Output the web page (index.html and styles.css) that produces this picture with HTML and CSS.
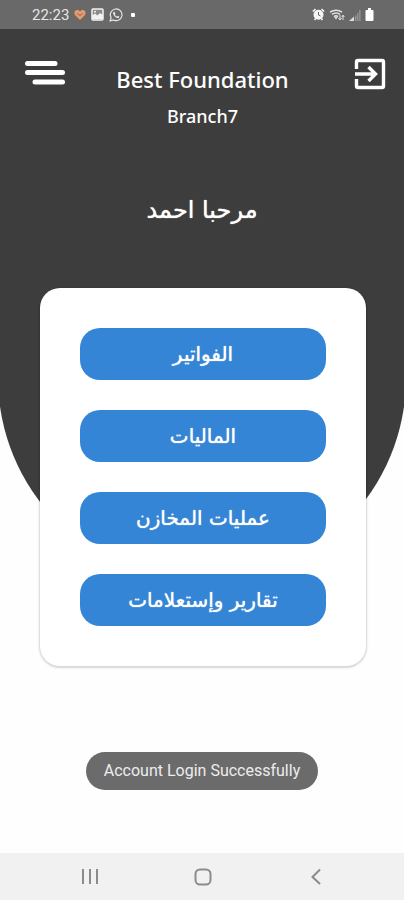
FILE: index.html
```
<!DOCTYPE html>
<html lang="ar">
<head>
<meta charset="utf-8">
<meta name="viewport" content="width=device-width, initial-scale=1">
<title>Best Foundation</title>
<link rel="stylesheet" href="styles.css">
</head>
<body>
<div class="status-bar">
  <div class="status-group">
    <span class="clock">22:23</span>
    <svg width="12" height="12" viewBox="0 0 12 12" aria-hidden="true"><path d="M6 11 1.200 6.200C-.7 3.600 1 1 3.200 1 4.600 1 5.500 1.700 6 2.500 6.500 1.700 7.400 1 8.800 1 11 1 12.700 3.600 10.800 6.200z" fill="#e69a6c"/><path d="m3.500 4.500 2.500 2 2.500-2" fill="none" stroke="#8a6552"/></svg>
    <svg width="13" height="13" viewBox="0 0 13 13" aria-hidden="true"><rect x="1" y="1" width="11" height="11" rx="1" fill="#8a8a8a" stroke="#f2f2f2" stroke-width="1.500"/><path d="M1 11V7.500l3-2 2.500 2L9 5l3 2v4z" fill="#f2f2f2"/><circle cx="4" cy="3.700" r="1" fill="#f2f2f2"/></svg>
    <svg width="14" height="14" viewBox="0 0 24 24" aria-hidden="true"><path d="M2 22l1.600-5.500A10 10 0 1 1 7.500 20.400z" fill="none" stroke="#e8e8e8" stroke-width="2"/><path d="M8.500 6.500c-1.600.8-2 2.800-.8 5 1.600 3 4.300 5.300 7 5.800 1.700.2 3-1 3-2.600L15 13.300l-1.400 1.500c-1.700-.7-3-2-3.800-3.600L11 9.800 9.800 6.700z" fill="#e8e8e8"/></svg>
    <span class="dot"></span>
  </div>
  <div class="status-group status-right">
    <svg width="13" height="13" viewBox="0 0 13 13" aria-hidden="true"><circle cx="6.500" cy="6.800" r="5" fill="#f5f5f5"/><path d="M.8 3.500 3.500 1M12.200 3.500 9.500 1M2.500 12l1.200-1.400M10.500 12 9.300 10.600" stroke="#f5f5f5" stroke-width="1.600"/><path d="M6.500 4v3l2 1" fill="none" stroke="#666"/></svg>
    <svg width="16" height="13" viewBox="0 0 16 13" aria-hidden="true"><path d="M1 4.200Q7 .2 13 4.200M3 6.400q4-2.900 8 0M5 8.600q2-1.700 4 0" fill="none" stroke="#e2e2e2" stroke-width="1.600"/><path d="M7 11.500 5 8.800h4z" fill="#e2e2e2"/><path d="M11 11.500V7M9.500 10l1.500 2 1.500-2M14 12V7.500M12.800 9 14 7.200 15.300 9" fill="none" stroke="#e2e2e2"/></svg>
    <svg width="12" height="12" viewBox="0 0 12 12" aria-hidden="true"><path d="M0 12 5 7.500V12z" fill="#ddd"/><path d="M6 12V6.500h1.500V12zM8.200 12V4h1.300v8zM10.200 12V1h1.300v11z" fill="#979797"/></svg>
    <svg width="9" height="13" viewBox="0 0 9 13" aria-hidden="true"><path d="M3 0h3v2h1.500q1 0 1 1v9q0 1-1 1h-6q-1 0-1-1V3q0-1 1-1H3z" fill="#fff"/></svg>
  </div>
</div>

<main class="screen">
  <header class="header">
    <button class="icon-button" type="button" aria-label="القائمة">
      <svg width="40" height="26" viewBox="0 0 40 26"><path d="M2.500 2.500H30M2.500 11.500h35M10 21h27.500" stroke="#fff" stroke-width="5" stroke-linecap="round"/></svg>
    </button>
    <div class="heading">
      <h1 class="title">Best Foundation</h1>
      <p class="branch">Branch7</p>
    </div>
    <button class="icon-button exit" type="button" aria-label="خروج">
      <svg width="32" height="32" viewBox="0 0 32 32" fill="none" stroke="#fff" stroke-width="3.400"><path d="M2.500 11V4q0-1.500 1.500-1.500h24q1.500 0 1.500 1.500v24q0 1.500-1.500 1.500H4Q2.500 29.500 2.500 28v-7M1 16h20M14.500 9l7 7-7 7"/></svg>
    </button>
  </header>

  <p class="greeting" dir="rtl">مرحبا احمد</p>

  <nav class="card" dir="rtl">
    <button class="action" type="button">الفواتير</button>
    <button class="action" type="button">الماليات</button>
    <button class="action" type="button">عمليات المخازن</button>
    <button class="action" type="button">تقارير وإستعلامات</button>
  </nav>

  <div class="toast" role="status">Account Login Successfully</div>
</main>

<div class="nav-bar">
  <button class="nav-button" type="button" aria-label="Recents"><svg width="18" height="18" viewBox="0 0 18 18"><path d="M2 1v15M9 1v15M16 1v15" stroke="#8b8b8b" stroke-width="2"/></svg></button>
  <button class="nav-button" type="button" aria-label="Home"><svg width="18" height="18" viewBox="0 0 18 18"><rect x="1.500" y="1.500" width="15" height="15" rx="4.500" fill="none" stroke="#8b8b8b" stroke-width="2"/></svg></button>
  <button class="nav-button" type="button" aria-label="Back"><svg width="18" height="18" viewBox="0 0 18 18"><path d="M13 1.500 5.500 9l7.500 7" fill="none" stroke="#8b8b8b" stroke-width="2"/></svg></button>
</div>
</body>
</html>
```

FILE: styles.css
```
* {
  box-sizing: border-box;
}

body {
  margin: 0;
  min-height: 100vh;
  display: flex;
  flex-direction: column;
  background: #fefefe;
  font-family: Roboto, "DejaVu Sans", sans-serif;
  color: #fff;
}

button {
  border: 0;
  padding: 0;
  background: none;
  color: inherit;
  font: inherit;
}

svg {
  display: block;
}

h1,
p {
  margin: 0;
}

.status-bar {
  display: flex;
  justify-content: space-between;
  align-items: center;
  height: 29px;
  padding: 0 30px 0 32px;
  background: #696969;
}

.status-group {
  display: flex;
  align-items: center;
  gap: 5px;
}

.status-right {
  gap: 4px;
}

.clock {
  font-size: 15px;
  color: #e6e6e6;
}

.dot {
  width: 4px;
  height: 4px;
  margin-left: 3px;
  border-radius: 1px;
  background: #fff;
}

.screen {
  position: relative;
  z-index: 0;
  flex: 1;
  display: flex;
  flex-direction: column;
  overflow-x: clip;
}

.screen::before {
  content: "";
  position: absolute;
  z-index: -1;
  top: 0;
  left: -2px;
  right: -2px;
  height: 553px;
  background: #3d3d3d;
  border-radius: 0 0 51vw 51vw;
}

.header {
  display: flex;
  justify-content: space-between;
  align-items: flex-start;
  padding: 32px 18px 0 25px;
}

.icon-button {
  width: 40px;
}

.exit {
  display: flex;
  justify-content: flex-end;
  width: 46px;
  margin-top: -3px;
}

.heading {
  font-family: "Noto Sans", Roboto, sans-serif;
  text-align: center;
}

.title {
  font-size: 22px;
  line-height: 36px;
  font-weight: 500;
}

.branch {
  font-size: 18px;
  line-height: 38px;
  font-weight: 500;
}

.greeting {
  margin-top: 56px;
  font-family: "DejaVu Sans", sans-serif;
  font-size: 24px;
  line-height: 38px;
  text-align: center;
  text-shadow: 0 0 1px #fff;
}

.card {
  display: flex;
  flex-direction: column;
  gap: 30px;
  margin: 59px 38px 0 40px;
  padding: 40px;
  border-radius: 20px;
  background: #fff;
  box-shadow: 0 1px 2px 1px rgba(0, 0, 0, 0.16);
}

.action {
  height: 52px;
  border-radius: 20px;
  background: #3485d6;
  font-family: "DejaVu Sans", sans-serif;
  font-size: 20px;
  text-shadow: 0 0 1px #fff;
}

.toast {
  align-self: center;
  margin: 86px 0 62px;
  padding: 0 18px;
  border-radius: 19px;
  background: #6b6b6b;
  color: #ededed;
  font-size: 16px;
  line-height: 38px;
}

.nav-bar {
  display: flex;
  justify-content: center;
  align-items: center;
  height: 47px;
  padding-left: 2px;
  background: #f1f1f1;
}

.nav-button {
  width: 28%;
  display: flex;
  justify-content: center;
}
```
